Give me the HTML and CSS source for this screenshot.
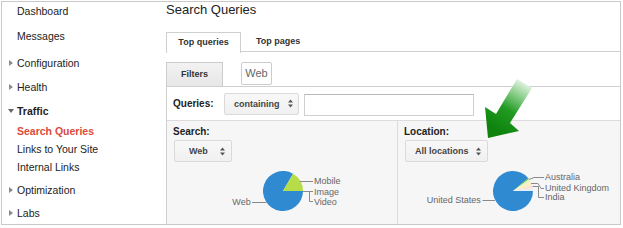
FILE: index.html
```html
<!DOCTYPE html>
<html>
<head>
<meta charset="utf-8">
<title>Search Queries</title>
<link rel="stylesheet" href="styles.css">
</head>
<body>
<div class="frame">
  <nav class="sidebar">
    <div class="nav-item gap-7"><span class="slot"></span>Dashboard</div>
    <div class="nav-item gap-9"><span class="slot"></span>Messages</div>
    <div class="nav-item gap-6"><span class="slot"><span class="caret-right"></span></span>Configuration</div>
    <div class="nav-item gap-6"><span class="slot"><span class="caret-right"></span></span>Health</div>
    <div class="nav-item nav-bold gap-2"><span class="slot"><span class="caret-down"></span></span>Traffic</div>
    <div class="nav-item nav-current"><span class="slot"></span>Search Queries</div>
    <div class="nav-item"><span class="slot"></span>Links to Your Site</div>
    <div class="nav-item gap-5"><span class="slot"></span>Internal Links</div>
    <div class="nav-item gap-5"><span class="slot"><span class="caret-right"></span></span>Optimization</div>
    <div class="nav-item"><span class="slot"><span class="caret-right"></span></span>Labs</div>
  </nav>

  <main class="main">
    <h1 class="title">Search Queries</h1>
    <div class="tabs">
      <div class="tab tab-active">Top queries</div>
      <div class="tab">Top pages</div>
    </div>
    <div class="filter-bar">
      <div class="filters-btn">Filters</div>
      <div class="chip">Web</div>
    </div>
    <div class="filter-box">
      <div class="query-row">
        <span class="field-label query-label">Queries:</span>
        <div class="select sel-containing">containing<svg class="updown" width="5" height="9" viewBox="0 0 5 9"><polygon points="0,3.6 2.5,0.4 5,3.6"/><polygon points="0,5.4 2.5,8.6 5,5.4"/></svg></div>
        <div class="text-input"></div>
      </div>
      <div class="columns">
        <div class="col col-search">
          <div class="field-label">Search:</div>
          <div class="select sel-web">Web<svg class="updown" width="5" height="9" viewBox="0 0 5 9"><polygon points="0,3.6 2.5,0.4 5,3.6"/><polygon points="0,5.4 2.5,8.6 5,5.4"/></svg></div>
          <svg class="chart" width="224" height="60" viewBox="0 0 224 60">
            <path d="M110,29 L120,11.68 A20,20 0 1,0 130,29 Z" fill="#2f8ad2"/>
            <path d="M110,29 L130,29 A20,20 0 0,0 120,11.68 Z" fill="#b6dd48"/>
            <g fill="none" stroke="#8a8a8a" stroke-width="1">
              <path d="M127,19.5 L140,19.5"/>
              <path d="M130,29.5 L140,29.5"/>
              <path d="M136.5,29.5 L136.5,39.5 L140,39.5"/>
              <path d="M79,40.5 L93.5,40.5"/>
            </g>
            <g class="chart-text">
              <text x="141" y="22.3">Mobile</text>
              <text x="141" y="32.8">Image</text>
              <text x="141" y="42.8">Video</text>
              <text x="77.7" y="43.4" text-anchor="end">Web</text>
            </g>
          </svg>
        </div>
        <div class="col col-location">
          <div class="field-label">Location:</div>
          <div class="select sel-locations">All locations<svg class="updown" width="5" height="9" viewBox="0 0 5 9"><polygon points="0,3.6 2.5,0.4 5,3.6"/><polygon points="0,5.4 2.5,8.6 5,5.4"/></svg></div>
          <svg class="chart" width="216" height="60" viewBox="0 0 216 60">
            <path d="M109,29 L124.09,15.88 A20,20 0 1,0 129,29 Z" fill="#2f8ad2"/>
            <path d="M109,29 L124.97,16.96 A20,20 0 0,0 124.09,15.88 Z" fill="#4fb43a"/>
            <path d="M109,29 L126.66,19.61 A20,20 0 0,0 124.97,16.96 Z" fill="#e2f2c8"/>
            <path d="M109,29 L128.02,22.82 A20,20 0 0,0 126.66,19.61 Z" fill="#fdf0c2"/>
            <path d="M109,29 L128.81,26.22 A20,20 0 0,0 128.02,22.82 Z" fill="#fde3d2"/>
            <path d="M109,29 L129,29 A20,20 0 0,0 128.81,26.22 Z" fill="#e2f0fa"/>
            <g fill="none" stroke="#8a8a8a" stroke-width="1">
              <path d="M125,17.5 L130,15.5 L140,15.5"/>
              <path d="M127,21.5 L134,21.5 L137,26.5 L140,26.5"/>
              <path d="M128.5,24.5 L134.5,24.5 L134.5,35.5 L140,35.5"/>
              <path d="M78.5,38.5 L91,38.5"/>
            </g>
            <g class="chart-text">
              <text x="141" y="18.4">Australia</text>
              <text x="141" y="29.1">United Kingdom</text>
              <text x="141" y="38.4">India</text>
              <text x="76.7" y="41.2" text-anchor="end">United States</text>
            </g>
          </svg>
        </div>
      </div>
    </div>
  </main>

  <svg class="arrow-overlay" width="623" height="228" viewBox="0 0 623 228">
    <defs>
      <linearGradient id="arrowGrad" gradientUnits="userSpaceOnUse" x1="529" y1="80" x2="498" y2="132">
        <stop offset="0" stop-color="#ffffff"/>
        <stop offset="0.3" stop-color="#8fd08f"/>
        <stop offset="0.6" stop-color="#229b22"/>
        <stop offset="1" stop-color="#0d820d"/>
      </linearGradient>
    </defs>
    <polygon points="488,138 485,107 496,114 517,79 532,88 510,123 519,131" fill="url(#arrowGrad)"/>
  </svg>
</div>
</body>
</html>
```

FILE: styles.css
```css
* {
  box-sizing: border-box;
}

html, body {
  margin: 0;
  padding: 0;
  background: #ffffff;
}

body {
  font-family: "Liberation Sans", Arial, sans-serif;
  color: #222;
}

.frame {
  position: relative;
  display: flex;
  width: 620px;
  height: 224px;
  margin: 1px 0 0 1px;
  border: 1px solid #c9c9c9;
  background: #fff;
  overflow: hidden;
}

/* ---------- sidebar ---------- */
.sidebar {
  width: 164px;
  flex: none;
  display: flex;
  flex-direction: column;
}

.nav-item {
  display: flex;
  align-items: center;
  height: 18px;
  padding-left: 6px;
  font-size: 10.5px;
  color: #222;
  white-space: nowrap;
}

.gap-2 { margin-bottom: 2px; }
.gap-5 { margin-bottom: 5px; }
.gap-6 { margin-bottom: 6px; }
.gap-7 { margin-bottom: 7px; }
.gap-9 { margin-bottom: 9px; }

.nav-bold {
  font-weight: bold;
}

.nav-current {
  font-weight: bold;
  color: #dd4b39;
}

.slot {
  width: 9px;
  flex: none;
  display: flex;
  align-items: center;
}

.caret-right {
  width: 0;
  height: 0;
  border-left: 4px solid #8a8a8a;
  border-top: 3px solid transparent;
  border-bottom: 3px solid transparent;
  margin-left: 1px;
}

.caret-down {
  width: 0;
  height: 0;
  border-top: 4px solid #666;
  border-left: 3px solid transparent;
  border-right: 3px solid transparent;
}

/* ---------- main ---------- */
.main {
  flex: 1;
  display: flex;
  flex-direction: column;
  min-width: 0;
}

.title {
  margin: 0;
  padding-top: 0;
  font-size: 13px;
  line-height: 16px;
  font-weight: normal;
  color: #222;
}

.tabs {
  display: flex;
  height: 20px;
  margin-top: 14px;
  border-bottom: 1px solid #cfcfcf;
}

.tab {
  height: 20px;
  line-height: 19px;
  padding: 0 15px;
  font-size: 9px;
  font-weight: bold;
  color: #333;
}

.tab-active {
  position: relative;
  width: 75px;
  height: 21px;
  margin-bottom: -1px;
  padding: 0;
  text-align: center;
  background: #fff;
  border: 1px solid #cfcfcf;
  border-bottom: none;
}

.filter-bar {
  display: flex;
  align-items: flex-start;
  height: 24px;
  margin-top: 10px;
}

.filters-btn {
  width: 57px;
  height: 24px;
  line-height: 23px;
  text-align: center;
  font-size: 9px;
  font-weight: bold;
  color: #333;
  background: linear-gradient(#f2f2f2, #e7e7e7);
  border: 1px solid #cccccc;
  border-bottom: none;
}

.chip {
  width: 31px;
  height: 23px;
  margin-left: 18px;
  line-height: 21px;
  text-align: center;
  font-size: 11px;
  color: #666;
  background: #fff;
  border: 1px solid #cccccc;
  border-radius: 2px;
}

.filter-box {
  flex: 1;
  display: flex;
  flex-direction: column;
  border-top: 1px solid #cfcfcf;
  border-left: 1px solid #cfcfcf;
}

.query-row {
  display: flex;
  align-items: center;
  height: 34px;
  padding-left: 6px;
  border-bottom: 1px solid #dcdcdc;
  background: #fff;
}

.field-label {
  font-size: 10px;
  font-weight: bold;
  color: #222;
  line-height: 13px;
}

.query-label {
  width: 51px;
}

.select {
  display: flex;
  align-items: center;
  justify-content: space-between;
  height: 22px;
  padding-right: 5px;
  font-size: 9px;
  font-weight: bold;
  color: #444;
  background: linear-gradient(#f8f8f8, #f0f0f0);
  border: 1px solid #dadada;
  border-radius: 2px;
  white-space: nowrap;
}

.updown {
  display: block;
  fill: #555;
  flex: none;
}

.sel-containing {
  width: 75px;
  padding-left: 9px;
  margin-right: 5px;
}

.text-input {
  width: 170px;
  height: 22px;
  margin-top: 2px;
  background: #fff;
  border: 1px solid #cfcfcf;
  border-top-color: #b8b8b8;
}

.columns {
  flex: 1;
  display: flex;
  background: #f6f6f6;
}

.col {
  padding: 4px 0 0 6px;
}

.col-search {
  width: 231px;
  border-right: 1px solid #dcdcdc;
}

.col-location {
  flex: 1;
}

.col .select {
  margin-top: 2px;
  margin-left: 1px;
}

.sel-web {
  width: 58px;
  padding-left: 14px;
  padding-right: 6px;
}

.sel-locations {
  width: 83px;
  padding-left: 9px;
  padding-right: 6px;
}

.chart {
  display: block;
}

.chart-text text {
  font-family: "Liberation Sans", Arial, sans-serif;
  font-size: 9px;
  fill: #666;
}

.arrow-overlay {
  position: absolute;
  left: -2px;
  top: -2px;
  pointer-events: none;
}
```
